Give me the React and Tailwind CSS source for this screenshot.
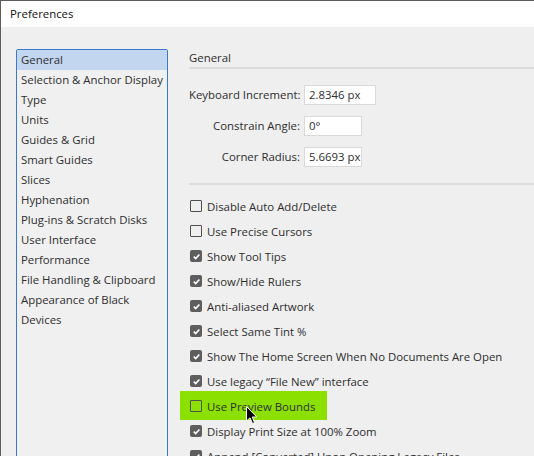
import React from 'react';

const categories = [
  'General',
  'Selection & Anchor Display',
  'Type',
  'Units',
  'Guides & Grid',
  'Smart Guides',
  'Slices',
  'Hyphenation',
  'Plug-ins & Scratch Disks',
  'User Interface',
  'Performance',
  'File Handling & Clipboard',
  'Appearance of Black',
  'Devices',
];

const options = [
  { label: 'Disable Auto Add/Delete', checked: false },
  { label: 'Use Precise Cursors', checked: false },
  { label: 'Show Tool Tips', checked: true },
  { label: 'Show/Hide Rulers', checked: true },
  { label: 'Anti-aliased Artwork', checked: true },
  { label: 'Select Same Tint %', checked: true },
  { label: 'Show The Home Screen When No Documents Are Open', checked: true },
  { label: 'Use legacy \u201cFile New\u201d interface', checked: true },
  { label: 'Use Preview Bounds', checked: false, highlight: true },
  { label: 'Display Print Size at 100% Zoom', checked: true },
  { label: 'Append [Converted] Upon Opening Legacy Files', checked: true },
];

function Checkbox({ checked }) {
  if (checked) {
    return (
      <span className="flex h-[12px] w-[12px] shrink-0 items-center justify-center rounded-[2px] bg-[#5e5e5e]">
        <svg width="9" height="9" viewBox="0 0 10 10">
          <path d="M2 5.2 L4.1 7.3 L8.2 2.8" fill="none" stroke="#fff" strokeWidth="1.8" />
        </svg>
      </span>
    );
  }
  return <span className="h-[12px] w-[12px] shrink-0 rounded-[1px] border border-[#505050]" />;
}

function Cursor() {
  return (
    <svg className="absolute left-[57px] top-[12px] z-20" width="12" height="19" viewBox="0 0 12 19">
      <path
        d="M0.5 0.5 L0.5 15 L4 11.8 L6.5 17.5 L8.6 16.6 L6.2 11 L10.8 11 Z"
        fill="#000"
        stroke="#fff"
        strokeWidth="1"
      />
    </svg>
  );
}

function Field({ label, value, width }) {
  return (
    <div className="flex items-center">
      <span className="w-[111px] shrink-0 whitespace-nowrap text-right">{label}</span>
      <div
        className={`ml-[4px] flex h-[20px] shrink-0 items-center overflow-hidden whitespace-nowrap border border-[#dadada] bg-white pl-[4px] ${width}`}
      >
        {value}
      </div>
    </div>
  );
}

export default function App() {
  return (
    <div
      className="h-[456px] w-[534px] overflow-hidden border-l border-t border-[#5c5c5c] text-[11.4px] text-[#2e2e2e]"
      style={{ fontFamily: '"Open Sans", "Noto Sans", sans-serif' }}
    >
      <div className="flex h-[26px] items-center bg-white pl-[9px] text-[#111]">Preferences</div>

      <div className="flex h-[430px] bg-[#efefef]">
        <div className="pl-[15px] pt-[22px]">
          <div className="h-[420px] w-[152px] rounded-[2px] border border-[#3b78d0] bg-[#f0f0f0]">
            {categories.map((c, i) => (
              <div
                key={c}
                className={`flex h-[20px] items-center whitespace-nowrap pl-[4px] ${i === 0 ? 'bg-[#c2d6ef]' : ''}`}
              >
                {c}
              </div>
            ))}
          </div>
        </div>

        <div className="flex-1 pl-[21px] pt-[23px]">
          <div className="border-b-2 border-[#dcdcdc] pb-[1px] leading-[16px]">General</div>

          <div className="mt-[16px] flex flex-col gap-[11px]">
            <Field label="Keyboard Increment:" value="2.8346 px" width="w-[72px]" />
            <Field label="Constrain Angle:" value="0°" width="w-[58px]" />
            <Field label="Corner Radius:" value="5.6693 px" width="w-[58px]" />
          </div>

          <div className="mt-[16px] border-b-2 border-[#dcdcdc]" />

          <div className="mt-[9px] flex flex-col">
            {options.map((o) => (
              <div key={o.label} className="relative flex h-[25px] items-center whitespace-nowrap pl-[1px]">
                {o.highlight && (
                  <span className="absolute -left-[9px] -top-[3px] z-0 h-[29px] w-[147px] bg-[#8be000]" />
                )}
                <span className="relative z-10 flex items-center gap-[5px]">
                  <Checkbox checked={o.checked} />
                  {o.label}
                </span>
                {o.highlight && <Cursor />}
              </div>
            ))}
          </div>
        </div>
      </div>
    </div>
  );
}
